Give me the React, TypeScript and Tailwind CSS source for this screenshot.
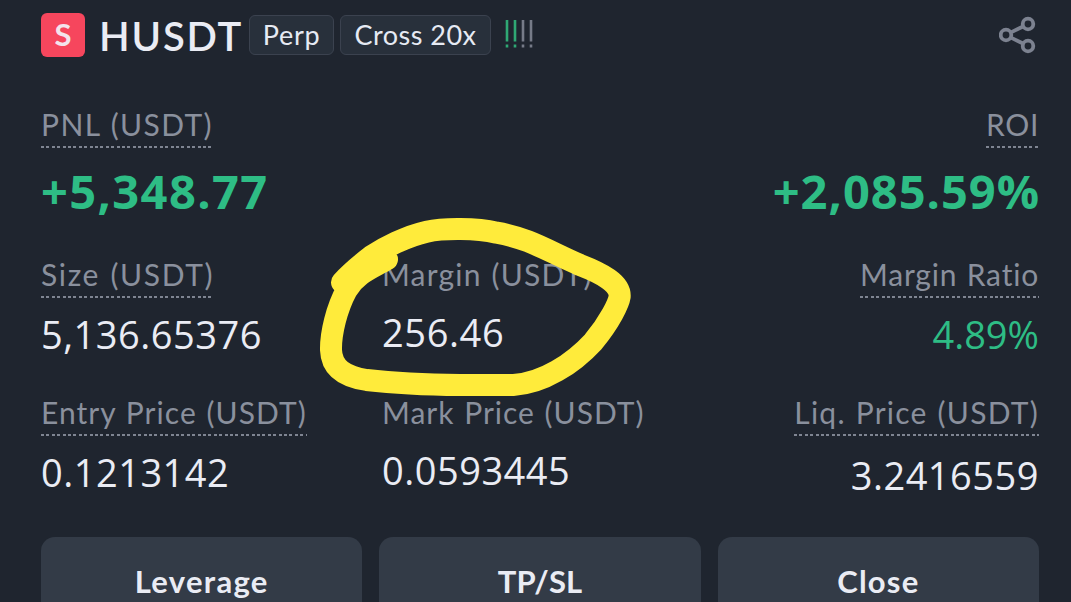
import type { ReactNode } from "react";
import { clsx } from "clsx";

interface FieldProps {
  label: string;
  value: string;
  align?: "left" | "right";
  underline?: boolean;
  labelClass?: string;
  valueClass: string;
}

const signalBars = [
  { x: 2, color: "#2fa874" },
  { x: 10, color: "#2fa874" },
  { x: 18, color: "#767b88" },
  { x: 26, color: "#767b88" },
];

const actions = [
  { label: "Leverage", className: "tracking-[1.3px]" },
  { label: "TP/SL", className: "tracking-[0.1px]" },
  { label: "Close", className: "tracking-[1.2px]" },
];

function Tag({ children, className }: { children: ReactNode; className: string }) {
  return (
    <span
      className={clsx(
        "flex h-10 items-center justify-center rounded-[6px] border border-[#3b424f] bg-[#28303b] pt-px text-[27px] text-[#e6eaf3]",
        className
      )}
    >
      {children}
    </span>
  );
}

function SignalIcon() {
  return (
    <svg width="30" height="30" viewBox="0 0 30 30" className="mb-0.5 ml-3.5">
      {signalBars.map((bar) => (
        <g key={bar.x} stroke={bar.color} strokeWidth="2.6">
          <path d={`M${bar.x} 1V22.5`} />
          <path d={`M${bar.x} 25.5V28.5`} />
        </g>
      ))}
    </svg>
  );
}

function ShareIcon() {
  return (
    <svg
      width="38"
      height="38"
      viewBox="0 0 38 38"
      fill="none"
      stroke="#7c8290"
      strokeWidth="3.8"
      className="mr-0.5 ml-auto"
    >
      <circle cx="29" cy="8" r="5.3" />
      <circle cx="7" cy="19" r="5.3" />
      <circle cx="29" cy="30" r="5.3" />
      <path d="M12 16.4 24 10.5M12 21.6 24 27.5" />
    </svg>
  );
}

function Field({ label, value, align = "left", underline = true, labelClass, valueClass }: FieldProps) {
  return (
    <div className={clsx("flex flex-col", align === "right" ? "items-end" : "items-start")}>
      <div className="flex flex-col">
        <span
          className={clsx(
            "h-10 text-[30px] leading-9 [word-spacing:1px] whitespace-nowrap text-[#8a909d]",
            labelClass
          )}
        >
          {label}
        </span>
        {underline && (
          <span className="h-0.5 bg-[repeating-linear-gradient(90deg,#7f8592_0_3px,transparent_3px_5.4px)]" />
        )}
      </div>
      <span className={clsx("font-['Open_Sans',sans-serif] whitespace-nowrap", valueClass)}>{value}</span>
    </div>
  );
}

function Highlight() {
  return (
    <svg
      width="350"
      height="210"
      viewBox="0 0 1050 630"
      fill="none"
      className="pointer-events-none absolute top-[200px] left-[300px]"
    >
      <path
        d="M261 178C215 205 170 220 140 270C110 325 92 400 93 450C95 505 135 530 200 540C270 548 370 554 480 555C560 555 600 555 640 555C730 550 820 490 880 425C930 365 956 310 959 290C962 250 905 220 840 195C750 157 690 115 590 98C530 84 430 84 380 95C320 108 250 145 215 168C180 195 155 215 126 247"
        stroke="#ffeb3b"
        strokeWidth="66"
        strokeLinecap="round"
        strokeLinejoin="round"
      />
    </svg>
  );
}

export default function App() {
  return (
    <main className="relative flex h-[602px] w-[1071px] flex-col overflow-hidden bg-[#1f252f] pr-8 pl-[41px] font-['Lato',sans-serif] [font-variant-ligatures:none]">
      <header className="mt-[13px] flex h-[44px] shrink-0 items-center">
        <span className="flex size-11 items-center justify-center rounded-[6px] bg-[#f6465d] pb-0.5 text-[31px] font-bold text-[#f3e4ec]">
          S
        </span>
        <h1 className="ml-3.5 w-[147px] pt-0.5 text-[40px] leading-10 font-semibold tracking-[1.8px] text-[#eaecf4]">
          HUSDT
        </h1>
        <Tag className="ml-[3px] w-[85px] tracking-[0.7px]">Perp</Tag>
        <Tag className="ml-1.5 w-[151px] tracking-[0.5px]">Cross 20x</Tag>
        <SignalIcon />
        <ShareIcon />
      </header>

      <section className="mt-[49px] flex h-[150px] shrink-0 justify-between">
        <Field
          label="PNL (USDT)"
          value="+5,348.77"
          labelClass="tracking-[1.4px]"
          valueClass="mt-[11px] text-[47px] leading-[64px] font-bold tracking-[1.4px] text-[#2ebd85]"
        />
        <Field
          label="ROI"
          value="+2,085.59%"
          align="right"
          labelClass="tracking-[0.7px]"
          valueClass="mt-[11px] -mr-px text-[47px] leading-[64px] font-bold tracking-[1px] text-[#2ebd85]"
        />
      </section>

      <section className="grid h-[138px] shrink-0 grid-cols-[341px_330px_1fr]">
        <Field
          label="Size (USDT)"
          value="5,136.65376"
          labelClass="tracking-[1.65px]"
          valueClass="mt-2.5 text-[38px] leading-[52px] tracking-[0.5px] text-[#eaecf4]"
        />
        <Field
          label="Margin (USDT)"
          value="256.46"
          underline={false}
          labelClass="tracking-[1.2px]"
          valueClass="mt-2.5 text-[38px] leading-[52px] tracking-[0.6px] text-[#eaecf4]"
        />
        <Field
          label="Margin Ratio"
          value="4.89%"
          align="right"
          labelClass="tracking-[0.8px]"
          valueClass="mt-2.5 text-[38px] leading-[52px] text-[#2ebd85]"
        />
      </section>

      <section className="grid h-[143px] shrink-0 grid-cols-[341px_330px_1fr]">
        <Field
          label="Entry Price (USDT)"
          value="0.1213142"
          labelClass="tracking-[1.05px]"
          valueClass="mt-2.5 text-[38px] leading-[52px] tracking-[0.5px] text-[#eaecf4]"
        />
        <Field
          label="Mark Price (USDT)"
          value="0.0593445"
          underline={false}
          labelClass="tracking-[1px]"
          valueClass="mt-2.5 text-[38px] leading-[52px] tracking-[0.5px] text-[#eaecf4]"
        />
        <Field
          label="Liq. Price (USDT)"
          value="3.2416559"
          align="right"
          labelClass="tracking-[1.25px]"
          valueClass="mt-[13px] text-[38px] leading-[52px] tracking-[0.5px] text-[#eaecf4]"
        />
      </section>

      <footer className="grid shrink-0 grid-cols-3 gap-[17px]">
        {actions.map((action) => (
          <button
            key={action.label}
            className={clsx(
              "flex h-[90px] items-center justify-center rounded-[14px] bg-[#333b47] pb-px text-[31px] font-bold text-[#eaecf4]",
              action.className
            )}
          >
            {action.label}
          </button>
        ))}
      </footer>
      <Highlight />
    </main>
  );
}
